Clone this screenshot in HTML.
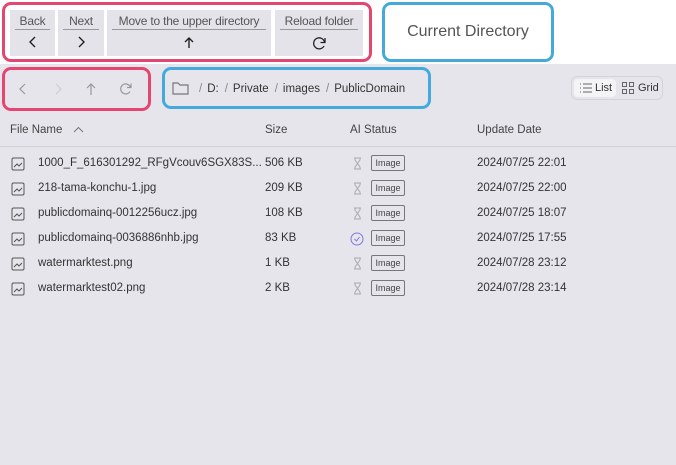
<!DOCTYPE html><html><head><style>
body{margin:0;width:676px;height:465px;overflow:hidden;background:#e6e5ec;font-family:"Liberation Sans",sans-serif;color:#333;position:relative}
.top{position:absolute;left:0;top:0;width:676px;height:64px;background:#fff}
.box{position:absolute;border-radius:9px;box-sizing:border-box}
.red{border:3px solid #e5466f}.blue{border:3px solid #45aadb}
.btn{position:absolute;top:10px;height:46px;background:#e4e3e9;text-align:center;font-size:12px;letter-spacing:-0.2px;color:#555}
.btn .l{margin:4px 5px 0;border-bottom:1px solid #999;padding-bottom:1px}
.btn svg{display:block;margin:6px auto 0}
.a{position:absolute;font-size:11.5px;color:#333;white-space:nowrap}
.h{color:#444}
.bc span{margin:0 6px 0 5px;color:#333}
.tag{position:absolute;left:371px;width:32px;height:14px;border:1px solid #777;border-radius:2px;font-size:9px;line-height:14px;text-align:center;color:#444}
</style></head><body>
<div class="top"></div>
<div class="box red" style="left:2px;top:2px;width:370px;height:60px"></div>
<div class="btn" style="left:10px;width:45px"><div class="l">Back</div><svg width="10" height="12"><path d="M7 1L2 6l5 5" fill="none" stroke="#222" stroke-width="1.4"/></svg></div>
<div class="btn" style="left:58px;width:46px"><div class="l">Next</div><svg width="10" height="12"><path d="M3 1l5 5-5 5" fill="none" stroke="#222" stroke-width="1.4"/></svg></div>
<div class="btn" style="left:107px;width:164px"><div class="l">Move to the upper directory</div><svg width="10" height="13"><path d="M5 12V2M1 6l4-4 4 4" fill="none" stroke="#222" stroke-width="1.4"/></svg></div>
<div class="btn" style="left:275px;width:88px"><div class="l">Reload folder</div><svg width="15" height="15"><path d="M12.5 6A5.5 5.5 0 1 0 12 10" fill="none" stroke="#222" stroke-width="1.3"/><path d="M13 2v4.5H8.5" fill="none" stroke="#222" stroke-width="1.3"/></svg></div>
<div class="box blue" style="left:382px;top:2px;width:172px;height:60px;text-align:center;line-height:54px;font-size:16px;color:#555">Current Directory</div>
<div class="box red" style="left:2px;top:67px;width:149px;height:44px"></div>
<svg style="position:absolute;left:19px;top:83px" width="8" height="12"><path d="M6 1L1 6l5 5" fill="none" stroke="#999" stroke-width="1.2"/></svg>
<svg style="position:absolute;left:54px;top:83px" width="8" height="12"><path d="M2 1l5 5-5 5" fill="none" stroke="#ccc" stroke-width="1.2"/></svg>
<svg style="position:absolute;left:86px;top:82px" width="10" height="14"><path d="M5 13V2M1 6l4-4 4 4" fill="none" stroke="#999" stroke-width="1.2"/></svg>
<svg style="position:absolute;left:119px;top:82px" width="14" height="14"><path d="M11.5 5.5A5 5 0 1 0 11 9.5" fill="none" stroke="#999" stroke-width="1.2"/><path d="M12 1.5v4H8" fill="none" stroke="#999" stroke-width="1.2"/></svg>
<div class="box blue" style="left:162px;top:67px;width:269px;height:42px"></div>
<svg style="position:absolute;left:172px;top:81px" width="17" height="14"><path d="M1 2h5l2 2h8v9H1z" fill="none" stroke="#777" stroke-width="1.2"/></svg>
<div class="a bc" style="left:199px;top:83px;color:#888">/<span>D:</span>/<span>Private</span>/<span>images</span>/<span>PublicDomain</span></div>
<div style="position:absolute;left:571px;top:76px;width:92px;height:24px;border:1px solid #d4d3da;border-radius:6px;box-sizing:border-box"></div>
<div style="position:absolute;left:574px;top:79px;width:42px;height:18px;background:#f4f4f7;border-radius:4px"></div>
<svg style="position:absolute;left:580px;top:83px" width="12" height="10"><path d="M0 1h1M3 1h9M0 5h1M3 5h9M0 9h1M3 9h9" stroke="#666"/></svg>
<div class="a" style="left:595px;top:82px;font-size:11px">List</div>
<svg style="position:absolute;left:622px;top:82px" width="12" height="12"><rect x=".5" y=".5" width="4" height="4" fill="none" stroke="#666"/><rect x="7.5" y=".5" width="4" height="4" fill="none" stroke="#666"/><rect x=".5" y="7.5" width="4" height="4" fill="none" stroke="#666"/><rect x="7.5" y="7.5" width="4" height="4" fill="none" stroke="#666"/></svg>
<div class="a" style="left:638px;top:82px;font-size:11px">Grid</div>
<div style="position:absolute;left:0;top:146px;width:676px;height:1px;background:#d2d1d8"></div>
<div class="a h" style="left:10px;top:124px">File Name</div>
<svg style="position:absolute;left:73px;top:126px" width="11" height="7"><path d="M1 6l4.5-4.5L10 6" fill="none" stroke="#777"/></svg>
<div class="a h" style="left:265px;top:124px">Size</div>
<div class="a h" style="left:350px;top:124px">AI Status</div>
<div class="a h" style="left:477px;top:124px">Update Date</div>
<div id="rows"></div>
<script>
var r=[["1000_F_616301292_RFgVcouv6SGX83S...","506 KB","2024/07/25 22:01",0],["218-tama-konchu-1.jpg","209 KB","2024/07/25 22:00",0],["publicdomainq-0012256ucz.jpg","108 KB","2024/07/25 18:07",0],["publicdomainq-0036886nhb.jpg","83 KB","2024/07/25 17:55",1],["watermarktest.png","1 KB","2024/07/28 23:12",0],["watermarktest02.png","2 KB","2024/07/28 23:14",0]];
var h="";r.forEach(function(x,i){var y=156+i*25;
h+='<svg style="position:absolute;left:11px;top:'+(y+1)+'px" width="14" height="14"><rect x="1" y="1" width="12" height="12" rx="1.5" fill="none" stroke="#555"/><path d="M3 10l3-3 2 2 3-3" fill="none" stroke="#555"/></svg>';
h+='<div class="a" style="left:38px;top:'+(y+1)+'px;width:224px;overflow:hidden">'+x[0]+'</div><div class="a" style="left:265px;top:'+(y+1)+'px">'+x[1]+'</div><div class="a" style="left:477px;top:'+(y+1)+'px">'+x[2]+'</div>';
h+=x[3]?'<svg style="position:absolute;left:350px;top:'+(y+1)+'px" width="14" height="14"><circle cx="7" cy="7" r="6" fill="none" stroke="#7a7ae0"/><path d="M4.5 7l2 2 3-4" fill="none" stroke="#7a7ae0"/></svg>':'<svg style="position:absolute;left:353px;top:'+(y+1)+'px" width="9" height="13"><path d="M1 1h7M1 12h7M2 1v2l2.5 3.5L2 10v2M7 1v2L4.5 6.5 7 10v2" fill="none" stroke="#aaa"/></svg>';
h+='<div class="tag" style="top:'+(y-1)+'px">Image</div>';});
document.getElementById("rows").innerHTML=h;
</script>
</body></html>
